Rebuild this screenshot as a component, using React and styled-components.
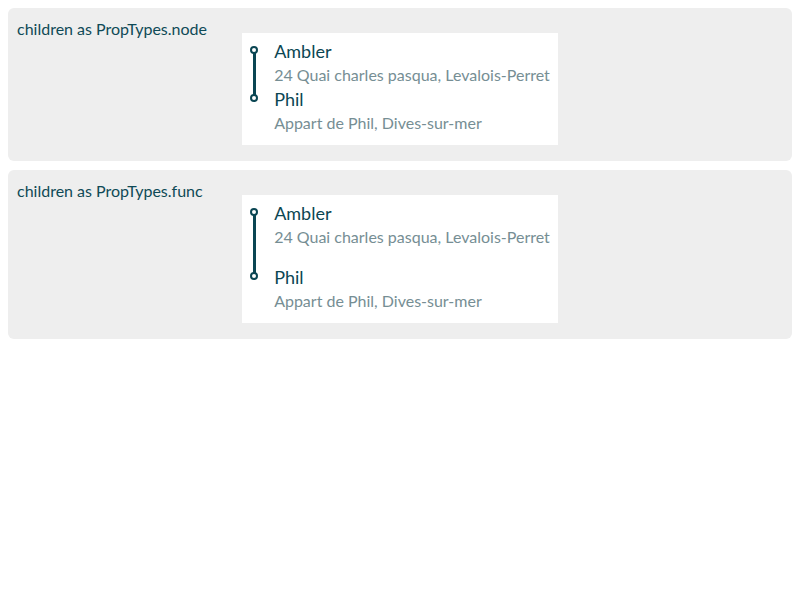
import React from "react";
import styled, { createGlobalStyle } from "styled-components";

const Global = createGlobalStyle`
  body {
    margin: 8px;
    background: #ffffff;
    font-family: Lato, "Open Sans", sans-serif;
  }
`;

const Panel = styled.section`
  background: #eeeeee;
  border-radius: 6px;
  padding: 12px 9px 16px;
  & + & {
    margin-top: 9px;
  }
`;

const Title = styled.div`
  font-size: 16px;
  line-height: 17px;
  color: #0f4a56;
  margin-bottom: -4px;
`;

const Card = styled.div`
  background: #ffffff;
  width: max-content;
  margin: 0 auto;
  padding: 6px 8px 10px 0;
  display: flex;
  flex-direction: column;
  gap: ${(p) => p.$gap}px;
`;

const Item = styled.div`
  position: relative;
  padding-left: 32px;
  &::before {
    content: "";
    position: absolute;
    left: 8px;
    top: 7px;
    width: 4px;
    height: 4px;
    border: 2px solid #0b4653;
    border-radius: 50%;
    background: #ffffff;
    z-index: 1;
  }
  &::after {
    content: "";
    display: ${(p) => (p.$last ? "none" : "block")};
    position: absolute;
    left: 10.5px;
    top: 11px;
    width: 3px;
    height: calc(100% + ${(p) => p.$gap}px);
    background: #0b4653;
  }
`;

const Name = styled.div`
  font-size: 18px;
  line-height: 24px;
  color: #0b4653;
`;

const Address = styled.div`
  font-size: 16px;
  line-height: 24px;
  color: #768e94;
`;

const stops = [
  { name: "Ambler", address: "24 Quai charles pasqua, Levalois-Perret" },
  { name: "Phil", address: "Appart de Phil, Dives-sur-mer" },
];

function Timeline({ gap }) {
  return (
    <Card $gap={gap}>
      {stops.map((s, i) => (
        <Item key={s.name} $gap={gap} $last={i === stops.length - 1}>
          <Name>{s.name}</Name>
          <Address>{s.address}</Address>
        </Item>
      ))}
    </Card>
  );
}

export default function App() {
  return (
    <>
      <Global />
      <Panel>
        <Title>children as PropTypes.node</Title>
        <Timeline gap={0} />
      </Panel>
      <Panel>
        <Title>children as PropTypes.func</Title>
        <Timeline gap={16} />
      </Panel>
    </>
  );
}
